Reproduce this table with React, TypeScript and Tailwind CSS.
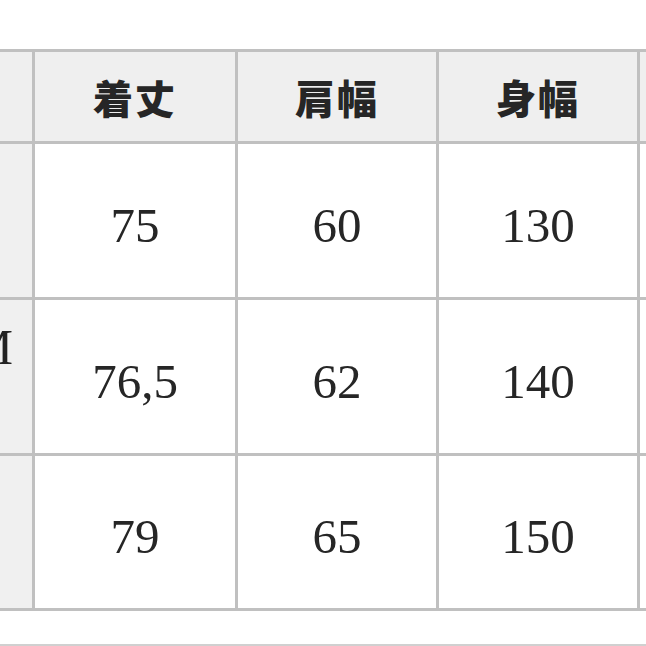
import React from 'react';

const HEADERS = ['着丈', '肩幅', '身幅'];

const ROWS = [
    { size: '', values: ['75', '60', '130'] },
    { size: 'M', values: ['76,5', '62', '140'] },
    { size: '', values: ['79', '65', '150'] },
];

export default function App() {
    return (
        <div className="w-[646px] h-[646px] bg-white overflow-hidden">
            <div className="pt-[49px]">
                <div className="grid grid-cols-[32px_200px_198px_198px_40px] grid-rows-[89px_153px_153px_152px] gap-[3px] py-[3px] bg-[#c0c0c0] w-[690px]">
                    <div className="bg-[#efefef]"></div>
                    {HEADERS.map(h => (
                        <div
                            key={h}
                            className="bg-[#efefef] flex items-center justify-center text-[40px] font-black text-[#262626] tracking-[2px]"
                            style={{ fontFamily: '"Noto Sans CJK JP", "Noto Sans CJK SC", sans-serif' }}
                        >
                            {h}
                        </div>
                    ))}
                    <div className="bg-[#efefef]"></div>

                    {ROWS.map((row, idx) => (
                        <React.Fragment key={idx}>
                            <div className="bg-[#f0f0f0] flex justify-end overflow-hidden">
                                <span className="font-['Liberation_Serif',serif] text-[50px] text-[#222] mt-[22px] mr-[19px] leading-none">{row.size}</span>
                            </div>
                            {row.values.map((v, i) => (
                                <div key={i} className="bg-white flex items-center justify-center pt-[10px] font-['Liberation_Serif',serif] text-[49px] text-[#262626]">
                                    {v}
                                </div>
                            ))}
                            <div className="bg-white"></div>
                        </React.Fragment>
                    ))}
                </div>
            </div>
            <div className="mt-[33px] h-[3px] bg-[#d0d0d0]"></div>
        </div>
    );
}
